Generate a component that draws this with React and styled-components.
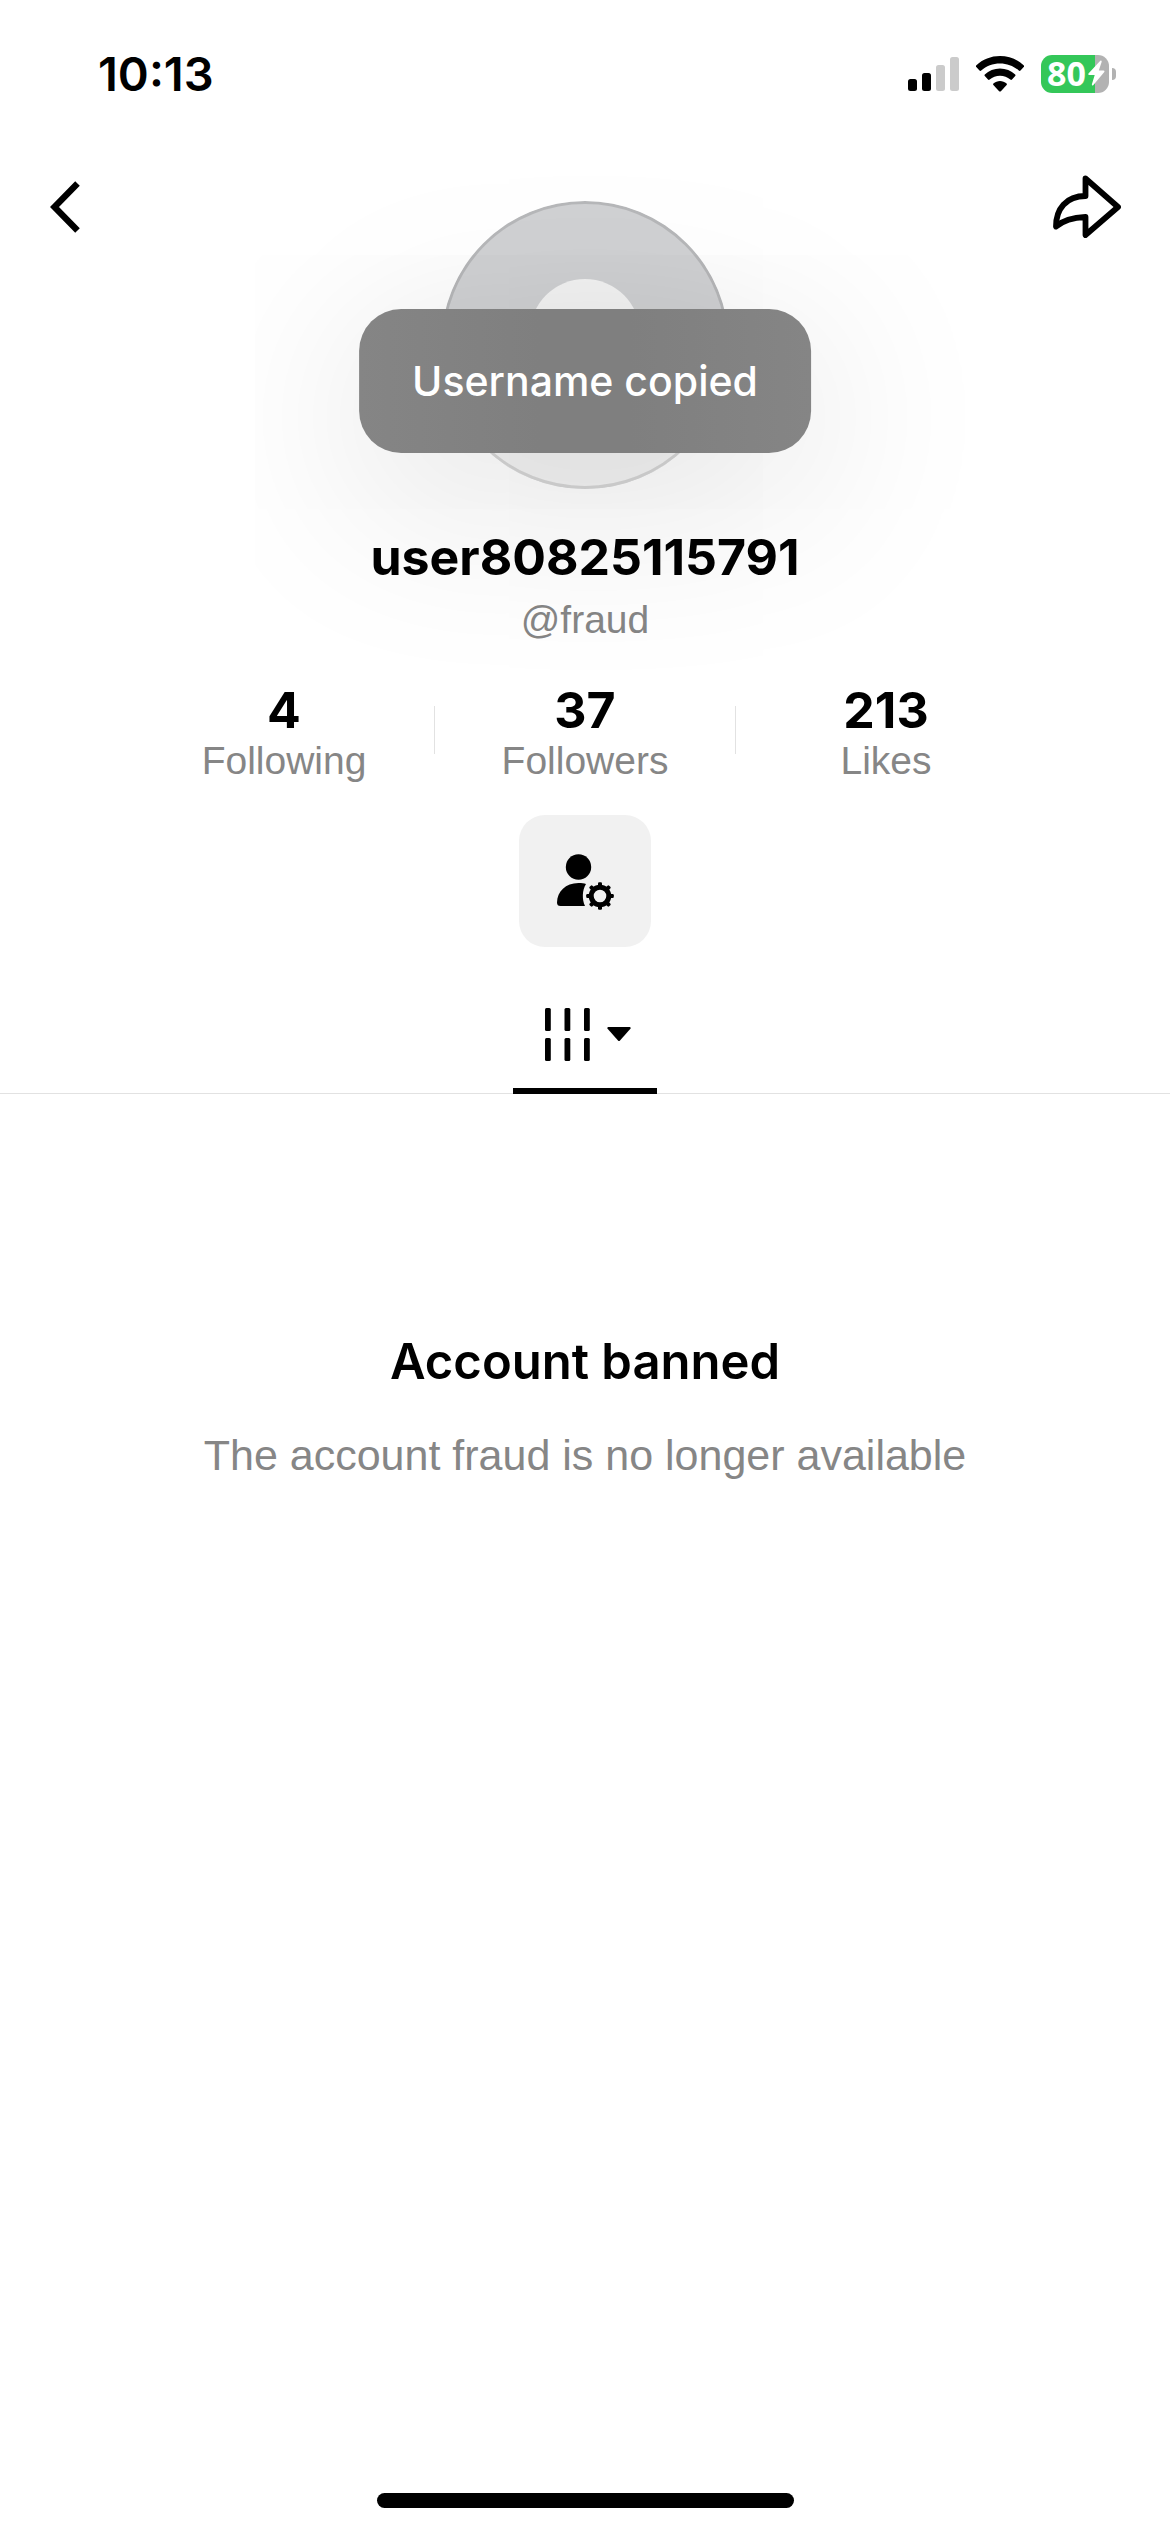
import styled, { createGlobalStyle, ThemeProvider } from "styled-components";

const theme = {
  surface: {
    neutral: "#ffffff",
    soft: "#f1f1f1",
    toast: "linear-gradient(90deg, #858585, #7f7f7f 40%, #7f7f7f 60%, #858585)",
  },
  text: {
    neutral: "#000000",
    muted: "#868686",
    inverse: "#ffffff",
  },
  line: "#e2e2e2",
  size: {
    body: "39px",
    label: "41px",
    heading: "49px",
    title: "50px",
  },
  font: {
    display: `Inter, "Liberation Sans", sans-serif`,
    body: `"Liberation Sans", Arial, sans-serif`,
  },
};

const GlobalStyle = createGlobalStyle`
  * {
    box-sizing: border-box;
  }

  body {
    margin: 0;
    background: #ffffff;
  }

  button {
    border: 0;
    padding: 0;
    background: none;
    color: inherit;
    font: inherit;
    cursor: pointer;
  }

  h1, h2, p {
    margin: 0;
  }

  svg {
    display: block;
  }
`;

const Page = styled.div`
  position: relative;
  display: flex;
  flex-direction: column;
  min-height: 100vh;
  background: ${({ theme }) => theme.surface.neutral};
  color: ${({ theme }) => theme.text.neutral};
  font-family: ${({ theme }) => theme.font.body};
`;

const StatusBar = styled.div`
  display: flex;
  align-items: center;
  justify-content: space-between;
  height: 141px;
  padding: 6px 54px 0 98px;
`;

const Time = styled.time`
  font: 600 47px/54px ${({ theme }) => theme.font.display};
`;

const StatusIcons = styled.div`
  display: flex;
  align-items: center;
  gap: 17px;
`;

const Battery = styled.div`
  display: flex;
  align-items: center;
  gap: 3px;
`;

const BatteryBody = styled.div`
  display: flex;
  align-items: center;
  gap: 2px;
  width: 68px;
  height: 38px;
  padding: 0 0 2px 6px;
  border-radius: 11px;
  background: linear-gradient(90deg, #34c759 80%, #b2b2b2 80%);
  color: ${({ theme }) => theme.text.inverse};
  font: 700 34px/36px "Noto Sans", sans-serif;
`;

const BatteryCap = styled.div`
  width: 4px;
  height: 12px;
  border-radius: 0 6px 6px 0;
  background: #b2b2b2;
`;

const Header = styled.header`
  display: grid;
  grid-template-columns: 1fr auto 1fr;
  align-items: start;
  padding: 33px 48px 0;
`;

const NavButton = styled.button`
  display: flex;
  align-items: center;
  justify-self: ${({ $end }) => ($end ? "end" : "start")};
  height: 66px;
`;

const Avatar = styled.div`
  width: 288px;
  height: 288px;
  margin-top: 27px;
  border-radius: 50%;
  background: #d0d1d3;
  overflow: hidden;
`;

const Profile = styled.main`
  display: flex;
  flex-direction: column;
  align-items: center;
`;

const Username = styled.h1`
  margin-top: 38px;
  font: 700 ${({ theme }) => theme.size.title} / 60px
    ${({ theme }) => theme.font.display};
`;

const Handle = styled.p`
  margin-top: 9px;
  color: ${({ theme }) => theme.text.muted};
  font-size: ${({ theme }) => theme.size.body};
  line-height: 48px;
`;

const Stats = styled.div`
  display: flex;
  align-items: center;
  margin-top: 39px;
`;

const Stat = styled.div`
  display: flex;
  flex-direction: column;
  align-items: center;
  width: 300px;
`;

const StatValue = styled.strong`
  font: 700 ${({ theme }) => theme.size.title} / 54px
    ${({ theme }) => theme.font.display};
`;

const StatLabel = styled.span`
  color: ${({ theme }) => theme.text.muted};
  font-size: ${({ theme }) => theme.size.body};
  line-height: 48px;
`;

const Divider = styled.div`
  width: 1px;
  height: 48px;
  margin-bottom: 8px;
  background: ${({ theme }) => theme.line};
`;

const ManageButton = styled.button`
  display: flex;
  align-items: center;
  justify-content: center;
  width: 132px;
  height: 132px;
  margin-top: 30px;
  border-radius: 26px;
  background: ${({ theme }) => theme.surface.soft};
`;

const Tabs = styled.nav`
  display: flex;
  justify-content: center;
  align-self: stretch;
  height: 147px;
  border-bottom: 1px solid ${({ theme }) => theme.line};
`;

const Tab = styled.button`
  display: flex;
  align-items: center;
  justify-content: center;
  gap: 17px;
  width: 144px;
  height: 147px;
  padding: 33px 0 0 5px;
  border-bottom: 6px solid ${({ theme }) => theme.text.neutral};
`;

const EmptyState = styled.section`
  display: flex;
  flex: 1;
  flex-direction: column;
  align-items: center;
  gap: 36px;
  padding-top: 238px;
`;

const EmptyTitle = styled.h2`
  font: 600 ${({ theme }) => theme.size.heading} / 60px
    ${({ theme }) => theme.font.display};
`;

const EmptyText = styled.p`
  color: ${({ theme }) => theme.text.muted};
  font-size: 43px;
  line-height: 54px;
`;

const HomeIndicator = styled.div`
  align-self: center;
  width: 417px;
  height: 15px;
  margin-bottom: 24px;
  border-radius: 8px;
  background: ${({ theme }) => theme.text.neutral};
`;

const Toast = styled.div`
  position: absolute;
  top: 309px;
  left: 50%;
  padding: 45px 53px;
  border-radius: 42px;
  transform: translateX(-50%);
  background: ${({ theme }) => theme.surface.toast};
  box-shadow: 0 36px 200px rgba(0, 0, 0, 0.14);
  color: ${({ theme }) => theme.text.inverse};
  font: 500 ${({ theme }) => theme.size.label} / 54px
    ${({ theme }) => theme.font.display};
  white-space: nowrap;
`;

function SignalIcon() {
  return (
    <svg width="51" height="36" viewBox="0 0 51 36" aria-hidden="true">
      <rect x="0" y="23" width="9" height="12" rx="2.5" />
      <rect x="14" y="17" width="9" height="18" rx="2.5" />
      <rect x="28" y="9" width="9" height="26" rx="2.5" fill="#cbcbcb" />
      <rect x="42" y="1" width="9" height="34" rx="2.5" fill="#cbcbcb" />
    </svg>
  );
}

function WifiIcon() {
  return (
    <svg width="48" height="36" viewBox="0 0 48 36" aria-hidden="true">
      <path d="M24 0C33 0 41.500 3.400 47.600 9.300Q48.500 10.200 47.700 11.100L44.500 14.500Q43.700 15.300 42.800 14.500C37.700 9.900 31.100 7.400 24 7.400S10.300 9.900 5.200 14.500Q4.300 15.300 3.500 14.500L.3 11.100Q-.5 10.200.4 9.300C6.500 3.400 15 0 24 0Z" />
      <path d="M24 12.400C29.800 12.400 35.200 14.600 39.200 18.400Q40 19.200 39.200 20.100L36 23.500Q35.200 24.300 34.300 23.500C31.500 21.100 27.900 19.700 24 19.700S16.500 21.100 13.700 23.500Q12.800 24.300 12 23.500L8.800 20.100Q8 19.200 8.800 18.400C12.800 14.600 18.200 12.400 24 12.400Z" />
      <path d="M24 25C26.400 25 28.700 25.900 30.600 27.400Q31.400 28.200 30.600 29.100L24.900 35.200Q24 36 23.100 35.200L17.400 29.100Q16.600 28.200 17.400 27.400C19.300 25.900 21.600 25 24 25Z" />
    </svg>
  );
}

function BoltIcon() {
  return (
    <svg width="17" height="26" viewBox="0 0 17 26" fill="#fff" aria-hidden="true">
      <path d="M12.300.7.700 13.300Q-.4 14.900 1.200 15.100H6.700L3.900 24.200Q3.800 26 5.200 25.200L16.100 12.300Q17.100 10.700 15.500 10.400H10.800L13.700 1.700Q13.700.1 12.300.7Z" />
    </svg>
  );
}

function BackIcon() {
  return (
    <svg width="36" height="54" viewBox="0 0 36 54" fill="none" aria-hidden="true">
      <path
        d="M29.500 3.500 6.500 27l23 23.500"
        stroke="#000"
        strokeWidth="6.400"
        strokeLinejoin="miter"
      />
    </svg>
  );
}

function ShareIcon() {
  return (
    <svg width="70" height="64" viewBox="0 0 70 64" fill="none" aria-hidden="true">
      <path
        d="M33.500 3.500 66 32 33.500 60V42C22 42.500 11 45.500 4 51.500C4 34 14 21 33.500 21Z"
        stroke="#000"
        strokeWidth="5.800"
        strokeLinejoin="round"
      />
    </svg>
  );
}

function AvatarPlaceholder() {
  return (
    <svg width="288" height="288" viewBox="0 0 288 288" fill="#f4f4f4" aria-hidden="true">
      <circle cx="144" cy="133" r="55" />
      <ellipse cx="144" cy="265" rx="115" ry="66" />
      <circle
        cx="144"
        cy="144"
        r="142.500"
        fill="none"
        stroke="#000"
        strokeOpacity="0.12"
        strokeWidth="3"
      />
    </svg>
  );
}

function ManageUserIcon() {
  const teeth = [0, 45, 90, 135, 180, 225, 270, 315];

  return (
    <svg width="58" height="58" viewBox="0 0 58 58" aria-hidden="true">
      <circle cx="22.500" cy="15" r="12.700" />
      <path d="M22.500 31C26 31 28 31.300 30 32C26 38.500 26 47.500 29 54H4.500Q1 54 1 50.500C1.300 39.500 9.500 31 22.500 31Z" />
      <circle cx="44" cy="44" r="8.800" fill="none" stroke="#000" strokeWidth="5" />
      {teeth.map((angle) => (
        <rect
          key={angle}
          x="42"
          y="30.200"
          width="4"
          height="5"
          rx="1.200"
          transform={`rotate(${angle} 44 44)`}
        />
      ))}
    </svg>
  );
}

function GridIcon() {
  return (
    <svg width="45" height="53" viewBox="0 0 45 53" aria-hidden="true">
      {[0, 19.5, 39].map((x) => (
        <g key={x}>
          <rect x={x} y="0" width="5.800" height="23" rx="1.500" />
          <rect x={x} y="30" width="5.800" height="23" rx="1.500" />
        </g>
      ))}
    </svg>
  );
}

function CaretIcon() {
  return (
    <svg width="24" height="15" viewBox="0 0 24 15" aria-hidden="true">
      <path d="M1.200 0H22.800Q24.300.5 23.400 1.800L13 13.500Q12 14.600 11 13.500L.6 1.800Q-.3.500 1.200 0Z" />
    </svg>
  );
}

const STATS = [
  { value: "4", label: "Following" },
  { value: "37", label: "Followers" },
  { value: "213", label: "Likes" },
];

export default function App() {
  return (
    <ThemeProvider theme={theme}>
      <GlobalStyle />
      <Page>
        <StatusBar>
          <Time>10:13</Time>
          <StatusIcons>
            <SignalIcon />
            <WifiIcon />
            <Battery>
              <BatteryBody>
                80
                <BoltIcon />
              </BatteryBody>
              <BatteryCap />
            </Battery>
          </StatusIcons>
        </StatusBar>

        <Header>
          <NavButton aria-label="Back">
            <BackIcon />
          </NavButton>
          <Avatar>
            <AvatarPlaceholder />
          </Avatar>
          <NavButton $end aria-label="Share">
            <ShareIcon />
          </NavButton>
        </Header>

        <Profile>
          <Username>user80825115791</Username>
          <Handle>@fraud</Handle>
          <Stats>
            {STATS.map(({ value, label }, index) => [
              index > 0 && <Divider key={`${label}-divider`} />,
              <Stat key={label}>
                <StatValue>{value}</StatValue>
                <StatLabel>{label}</StatLabel>
              </Stat>,
            ])}
          </Stats>
          <ManageButton aria-label="Manage user">
            <ManageUserIcon />
          </ManageButton>
          <Tabs>
            <Tab aria-label="Videos">
              <GridIcon />
              <CaretIcon />
            </Tab>
          </Tabs>
        </Profile>

        <EmptyState>
          <EmptyTitle>Account banned</EmptyTitle>
          <EmptyText>The account fraud is no longer available</EmptyText>
        </EmptyState>

        <HomeIndicator />
        <Toast role="status">Username copied</Toast>
      </Page>
    </ThemeProvider>
  );
}
